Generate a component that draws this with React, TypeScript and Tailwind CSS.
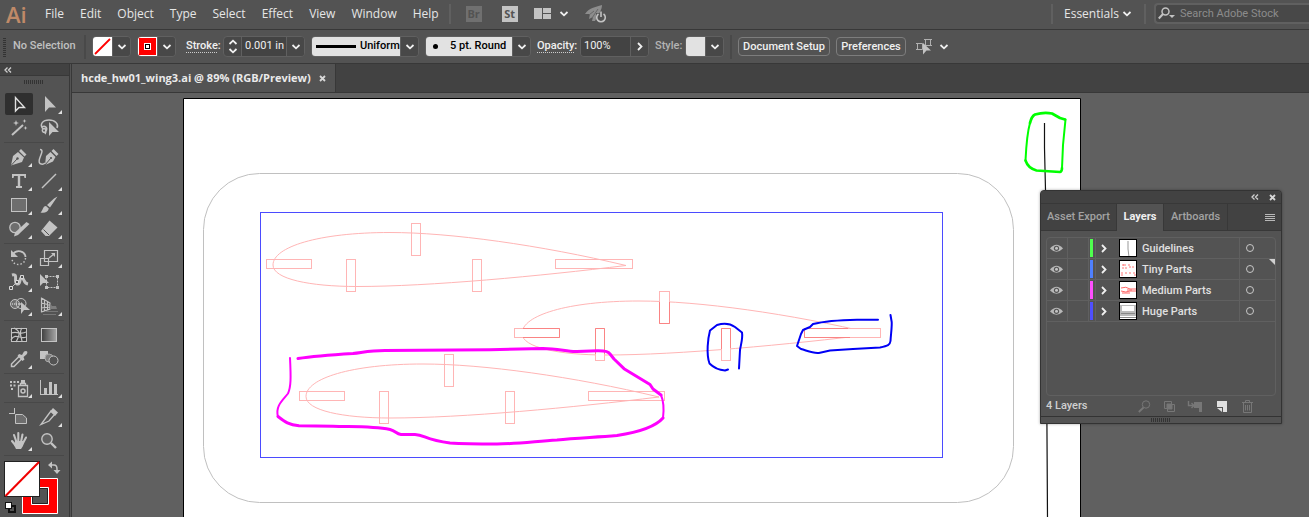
import type { ReactNode } from "react";

const menus = ["File", "Edit", "Object", "Type", "Select", "Effect", "View", "Window", "Help"];

type Tool = { name: string; icon: ReactNode; more?: boolean; active?: boolean };

const toolGroups: Tool[][] = [
  [
    { name: "Selection", active: true, icon: <path d="M11.500 5.500V19L15 15.500H20.500Z" fill="none" stroke="#e0e0e0" strokeWidth="1.400" /> },
    { name: "Direct Selection", more: true, icon: <path d="M11 4V20L15 15.500H22Z" /> },
    {
      name: "Magic Wand",
      icon: (
        <>
          <path d="M8 19L19 9" stroke="#c3c3c3" strokeWidth="2" />
          <path d="M12 4l.8 2.200L15 7l-2.200.8L12 10l-.8-2.200L9 7l2.200-.8ZM20.500 3l.6 1.400 1.400.6-1.400.6-.6 1.400-.6-1.400-1.400-.6 1.400-.6ZM21.500 10l.6 1.400 1.400.6-1.400.6-.6 1.400-.6-1.400-1.400-.6 1.400-.6Z" />
        </>
      ),
    },
    {
      name: "Lasso",
      icon: (
        <>
          <path d="M9 13C5 8 9 4 15 4S25 8 23 12M8 11c3-2 6 1 4 4s-5 0-3-2 4 2 2 5" fill="none" stroke="#c3c3c3" strokeWidth="1.500" />
          <path d="M15 6V20L18.500 16H25Z" />
        </>
      ),
    },
  ],
  [
    {
      name: "Pen",
      more: true,
      icon: (
        <>
          <path d="M17 4L22.500 9.500L20.500 11.500L15 6ZM14 7L20 12.500L18 17L7 20.500L9 11Z" />
          <path d="M7 20.500L13 14" stroke="#535353" />
          <circle cx="13.500" cy="13.500" r="1.200" fill="#535353" />
        </>
      ),
    },
    {
      name: "Curvature",
      icon: (
        <>
          <path d="M19.500 4L24.500 9L22.500 11L17.500 6ZM16.500 7L21.500 12L19 16.500L11 20L12 11Z" />
          <path d="M11 20L16.500 13.500" stroke="#535353" />
          <circle cx="17" cy="13" r="1.100" fill="#535353" />
          <path d="M6 4.500C12 5 2 15 6 18.500Q9 20 11 18" fill="none" stroke="#c3c3c3" strokeWidth="1.500" />
        </>
      ),
    },
    { name: "Type", more: true, icon: <path d="M8 5H22V9H20.500L20 7H16.200V17H18V19H12V17H13.800V7H10L9.500 9H8Z" /> },
    { name: "Line Segment", more: true, icon: <path d="M8 19L22 5" stroke="#c3c3c3" strokeWidth="1.500" /> },
    { name: "Rectangle", more: true, icon: <rect x="7.500" y="5.500" width="15" height="13" fill="#6e6e6e" stroke="#c3c3c3" /> },
    { name: "Paintbrush", more: true, icon: <path d="M23.500 3.500L16 14.500L13 12L20 5.500ZM12 13L14.800 15.500C14 19.500 10 20.500 6.500 19.500C9 18 8.500 13 12 13Z" /> },
    {
      name: "Shaper",
      more: true,
      icon: (
        <>
          <circle cx="11" cy="10.500" r="5.200" fill="#6e6e6e" stroke="#c3c3c3" strokeWidth="1.300" />
          <path d="M25.500 7L14 18L10 19.500L11 15.500L22.500 5Z" />
        </>
      ),
    },
    {
      name: "Eraser",
      more: true,
      icon: (
        <>
          <path d="M15.500 3.500L23.500 10.500L15 19H11.500L7 14Z" />
          <path d="M9.500 12.500L15 18" stroke="#535353" />
        </>
      ),
    },
  ],
  [
    {
      name: "Rotate",
      more: true,
      icon: (
        <>
          <path d="M9 8C13 3 21 5 21.500 11" fill="none" stroke="#c3c3c3" strokeWidth="1.800" />
          <path d="M21.500 12C21 20 9 21 8 13" fill="none" stroke="#c3c3c3" strokeWidth="1.500" strokeDasharray="1.500 2" />
          <path d="M7 4V11H14Z" />
        </>
      ),
    },
    {
      name: "Scale",
      more: true,
      icon: (
        <>
          <path d="M6.500 12.500h8v7h-8ZM10.500 4.500h13v11h-13Z" fill="none" stroke="#c3c3c3" strokeWidth="1.200" />
          <path d="M15 12L20 8" stroke="#c3c3c3" strokeWidth="1.300" />
          <path d="M17 7H21V11Z" />
        </>
      ),
    },
    {
      name: "Width",
      more: true,
      icon: (
        <>
          <path d="M8 5C15 3 9 12 13 14C17 15 15 7 18 8C21 9 19 13 24 14" fill="none" stroke="#c3c3c3" strokeWidth="3" />
          <path d="M7 18L18 7" stroke="#c3c3c3" />
          <path d="M5.500 16.500h3v3h-3ZM11.500 10.500h3v3h-3ZM16.500 5.500h3v3h-3Z" fill="#535353" stroke="#d8d8d8" />
        </>
      ),
    },
    {
      name: "Free Transform",
      icon: (
        <>
          <rect x="12.500" y="6.500" width="11" height="11" fill="none" stroke="#c3c3c3" strokeDasharray="2 1" />
          <path d="M11 5h3v3h-3ZM22 5h3v3h-3ZM11 16h3v3h-3ZM22 16h3v3h-3ZM6 4V16L9 13H15Z" />
        </>
      ),
    },
    {
      name: "Shape Builder",
      more: true,
      icon: (
        <>
          <circle cx="11" cy="10" r="4.500" fill="#6e6e6e" stroke="#c3c3c3" />
          <circle cx="17" cy="9.500" r="5" fill="none" stroke="#c3c3c3" />
          <path d="M8 10H18" stroke="#eee" strokeDasharray="1 1" />
          <path d="M17 8V20L20 16H26Z" />
        </>
      ),
    },
    {
      name: "Perspective Grid",
      more: true,
      icon: (
        <>
          <path d="M7.500 3.500V18.500M7.500 4L16 9V15L7.500 18M7 9L16 11M7 14L16 13M10.500 6V17M13.500 7V16" fill="none" stroke="#c3c3c3" strokeWidth="1.200" />
          <path d="M16 9L18 12H22L23 15H16Z" fill="#7d7d7d" />
          <path d="M12 17.500H24M9 20.500H22" stroke="#777" />
        </>
      ),
    },
  ],
  [
    {
      name: "Mesh",
      icon: (
        <>
          <rect x="7.500" y="5.500" width="15" height="13" fill="#3b3b3b" stroke="#c3c3c3" />
          <path d="M10 5C18 9 15 13 12 19M7 10C14 8 17 12 22 9M7 17C11 9 17 17 22 14M18 5C14 10 18 14 18 19" fill="none" stroke="#c3c3c3" strokeWidth="1.200" />
        </>
      ),
    },
    {
      name: "Gradient",
      icon: (
        <>
          <defs>
            <linearGradient id="tool-gradient">
              <stop stopColor="#3f3f3f" />
              <stop offset="1" stopColor="#a8a8a8" />
            </linearGradient>
          </defs>
          <rect x="7.500" y="5.500" width="15" height="13" fill="url(#tool-gradient)" stroke="#c3c3c3" />
        </>
      ),
    },
    {
      name: "Eyedropper",
      more: true,
      icon: (
        <>
          <path d="M15.500 9L7.500 17V19.500H10L18 11.500" fill="none" stroke="#c3c3c3" strokeWidth="1.500" />
          <path d="M15 7L18 8L20 4.500C23 3 24.500 5 22.500 7.500L19.500 10L20.500 12.500L18.500 14L13.500 9Z" />
        </>
      ),
    },
    {
      name: "Blend",
      icon: (
        <>
          <rect x="6" y="4" width="8" height="8" />
          <circle cx="15" cy="11" r="4" fill="#7b7b7b" stroke="#a8a8a8" />
          <circle cx="19.500" cy="13.500" r="4.500" fill="#535353" stroke="#c3c3c3" />
        </>
      ),
    },
  ],
  [
    {
      name: "Symbol Sprayer",
      more: true,
      icon: (
        <>
          <path d="M14.500 9.500h9v11h-9ZM16.500 9V7.500h5V9" fill="none" stroke="#c3c3c3" strokeWidth="1.300" />
          <path d="M17 4h4v3h-4ZM6 5h2v2H6ZM9.500 5h2v2h-2ZM13 5h2v2h-2ZM6 8.500h2v2H6ZM9.500 8.500h2v2h-2ZM7 12h2v2H7Z" />
          <circle cx="19" cy="15" r="2" fill="none" stroke="#c3c3c3" strokeWidth="1.500" />
        </>
      ),
    },
    { name: "Column Graph", more: true, icon: <path d="M6 4h1v14h17v1H6ZM10 12h3v6h-3ZM15 6h3v12h-3ZM20 8h3v10h-3Z" /> },
  ],
  [
    {
      name: "Artboard",
      icon: <path d="M5 8.500h5M10.500 3v6M11.500 9.500H18.500L22.500 13V18.500H11.500Z" fill="#6e6e6e" stroke="#c3c3c3" />,
    },
    {
      name: "Slice",
      more: true,
      icon: (
        <>
          <path d="M17 6L21 9L15 16L7 19.500L14 10Z" fill="none" stroke="#c3c3c3" strokeWidth="1.300" />
          <path d="M19 3L24 7.500L21 11L16 6.500Z" />
        </>
      ),
    },
    {
      name: "Hand",
      more: true,
      icon: (
        <>
          <path d="M11 12H20L19 17L17 20H12L10 16Z" />
          <path d="M8 12L12 17M10 6L12.500 13M14.300 4V13M18.500 5.500L17 13M22 8.500L18.500 15" stroke="#c3c3c3" strokeWidth="2.100" strokeLinecap="round" />
        </>
      ),
    },
    {
      name: "Zoom",
      icon: (
        <>
          <circle cx="13" cy="10" r="5.200" fill="#606060" stroke="#c3c3c3" strokeWidth="1.400" />
          <path d="M17 14L22 19" stroke="#c3c3c3" strokeWidth="2.400" />
        </>
      ),
    },
  ],
];

const layers = [
  { name: "Guidelines", color: "bg-[#4fff4f]", thumb: <path d="M8 1V9L9 17" fill="none" stroke="#999" /> },
  {
    name: "Tiny Parts",
    color: "bg-[#4f80ff]",
    thumb: <path d="M2 4H6M4 3V6M8 4H10M2 7H7M9 6H14M1 12H3M1 14H3M6 11V14M10 11V14M13 12H16M14 14H16" fill="none" stroke="#ff7777" strokeDasharray="2 1" />,
  },
  { name: "Medium Parts", color: "bg-[#ff4fff]", thumb: <path d="M1 6Q6 4 10 7H16M1 9Q6 11 10 9H16M2 11H10M7 8H12" fill="none" stroke="#ff6666" /> },
  {
    name: "Huge Parts",
    color: "bg-[#4f4fff]",
    thumb: (
      <>
        <path d="M0 2H16V13H0Z" fill="#bbb" />
        <path d="M2 3H14V8H2Z" fill="#fff" />
        <path d="M1 10.500H15M0 14.500H16" stroke="#888" />
      </>
    ),
  },
];

const wingTop = "M273 265C273 247 318 232.500 390 232.500C450 232.500 540 245 626 265.500";
const wingBottom = "M273 265C273 279 310 286.500 357 286.500C430 286.500 540 276 626 265.500";

type Slot = [number, number, number, number];

const upperSlots: Slot[] = [
  [266.5, 259.5, 45, 9],
  [346.5, 259.5, 9, 32],
  [411.5, 223.5, 9, 32],
  [472.5, 259.5, 9, 32],
  [555.5, 259.5, 77, 9],
];
const middleSlots: Slot[] = [
  [514.5, 328.5, 45, 9],
  [595.5, 328.5, 9, 32],
  [659.5, 291.5, 10, 32],
  [721.5, 328.5, 9, 32],
  [804.5, 328.5, 76, 9],
];
const lowerSlots: Slot[] = [
  [299.5, 391.5, 45, 9],
  [379.5, 391.5, 9, 32],
  [444.5, 354.5, 9, 32],
  [505.5, 391.5, 9, 32],
  [588.5, 391.5, 76, 9],
];

function Slots({ items, fill }: { items: Slot[]; fill: string }) {
  return (
    <>
      {items.map(([x, y, w, h]) => (
        <rect key={`${x}-${y}`} x={x} y={y} width={w} height={h} fill={fill} />
      ))}
    </>
  );
}

function Artboard() {
  return (
    <svg viewBox="183 98 898 420" className="block h-[420px] w-[898px]" fill="none" role="img" aria-label="Wing artwork">
      <path d="M183.500 530V98.500H1080.500V530" fill="#fff" stroke="#000" />
      <rect x="203.500" y="173.500" width="810" height="329" rx="56" stroke="#c0c0c0" />
      <rect x="260.500" y="212.500" width="682" height="245" stroke="#4b4bff" />
      <g stroke="#ffb5b5">
        <path d={wingTop} />
        <path d={wingBottom} />
        <g transform="translate(249 68.500)">
          <path d={wingTop} />
          <path d={wingBottom} />
        </g>
        <g transform="translate(33 131.500)">
          <path d={wingTop} />
          <path d={wingBottom} />
        </g>
        <Slots items={upperSlots} fill="none" />
        <Slots items={middleSlots} fill="#fff" />
        <Slots items={lowerSlots} fill="none" />
      </g>
      <path
        d="M523 328.500H559.500V337.500H523M595.500 354V328.500H604.500V354M659.500 302V323.500H669.500V302M721.500 349V328.500H730.500V348M848 328.500H804.500V337.500H850"
        stroke="#fa8484"
      />
      <path d="M1044.500 123V148L1045.500 190L1047.500 518" stroke="#111" strokeWidth="1.200" />
      <g strokeLinejoin="round" strokeLinecap="round">
        <path
          d="M298 358.500C315 356 330 355 353 353.500C365 352 371 350.500 385 350.500L490 349.700L543 348.500C558 348.500 568 352 577 351.500L597 350.700C606 350.500 609 352 610 354L614 359L624 368.700L650 384.500L653 389L661 395"
          stroke="#ff00ff"
          strokeWidth="3"
        />
        <path d="M661 395C664 402 664 410 663 418" stroke="#ff00ff" strokeWidth="2" />
        <path
          d="M663 418C656 426 640 432 617 435.500C592 437.500 575 438 557 440C530 442 515 444 497 444C475 444 465 444 450 443C425 440 425 435 415 434.500H401C396 434 396 431 390 429.500C372 426 350 427 333 426.300L299 425.700C289 425 285 422 278 416.500"
          stroke="#ff00ff"
          strokeWidth="3"
        />
        <path d="M278 416.500C275 406 283 400 288 393.500C291 387 291 378 290 358" stroke="#ff00ff" strokeWidth="2" />
        <path
          d="M728 369.500L725 370.500C717 370 713 367 709.500 363.500C706 354 708 338 710 330.500L717 325C724 323 730 323.500 735 327L742 332.500C743 338 741 344 740 350L739 368.500"
          stroke="#0000f5"
          strokeWidth="2"
        />
        <path
          d="M878 319.700H857C842 320 825 321 813 324L810 327L803 330L801 334L797 346L801 349C808 351 814 354 820 352.700L830 350.500L853 349L880 347.500C888 346 890 345 890.500 341C891 333 892 327 891.700 322L890.500 315"
          stroke="#0000f5"
          strokeWidth="2"
        />
        <path
          d="M1065 119.500L1060 118L1052 113.500C1045 112 1040 113 1035 114.500C1032 116 1031 119 1030 123"
          stroke="#00ff00"
          strokeWidth="2.800"
        />
        <path d="M1030 123C1028 130 1026 150 1025.500 160.500" stroke="#00ff00" strokeWidth="2" />
        <path d="M1025.500 160.500C1027 165 1031 169 1036.500 170.500L1060 172C1062 171.500 1062 170 1062 168" stroke="#00ff00" strokeWidth="2.600" />
        <path d="M1062 168L1063 145L1065.500 119.500" stroke="#00ff00" strokeWidth="2" />
      </g>
    </svg>
  );
}

function Chevron({ className = "w-2.5" }: { className?: string }) {
  return (
    <svg viewBox="0 0 10 6" className={`h-1.5 ${className}`} fill="none" stroke="#f0f0f0" strokeWidth="1.800" aria-hidden="true">
      <path d="M1.500 1L5 4.300L8.500 1" />
    </svg>
  );
}

function RightChevron() {
  return (
    <svg viewBox="0 0 6 9" className="h-[9px] w-1.5" fill="none" stroke="#f0f0f0" strokeWidth="1.800" aria-hidden="true">
      <path d="M1 1L4.500 4.500L1 8" />
    </svg>
  );
}

function DropButton({ label }: { label: string }) {
  return (
    <button type="button" aria-label={label} className="flex w-[18px] shrink-0 items-center justify-center border-l border-[#606060] bg-[#484848]">
      <Chevron />
    </button>
  );
}

function Grip() {
  return <span className="h-1 w-5 bg-[repeating-linear-gradient(90deg,#333_0_1px,#535353_1px_2px)]" />;
}

function DoubleChevron() {
  return (
    <svg viewBox="0 0 8 6" className="h-1.5 w-2" fill="none" stroke="#d0d0d0" strokeWidth="1.300" aria-hidden="true">
      <path d="M3.500 .5L1 3L3.500 5.500M7 .5L4.500 3L7 5.500" />
    </svg>
  );
}

function Cross() {
  return (
    <svg viewBox="0 0 7 7" className="size-[7px]" stroke="#d8d8d8" strokeWidth="1.800" aria-hidden="true">
      <path d="M1 1L6 6M6 1L1 6" />
    </svg>
  );
}

function MenuBar() {
  return (
    <header className="flex h-[30px] shrink-0 items-center border-b border-[#383838] pb-0.5 text-[12px] text-[#e6e6e6]">
      <span className="w-[37px] pl-1.5 text-[22px] leading-6 font-semibold text-[#c08a68]">Ai</span>
      <nav className="flex items-center">
        {menus.map((m) => (
          <button key={m} type="button" className="px-2">
            {m}
          </button>
        ))}
      </nav>
      <div className="ml-0.5 flex items-center">
        <span className="h-5 w-0.5 bg-[#606060]" />
        <button type="button" className="ml-[15px] size-4 bg-[#707070] text-[11px] leading-4 font-bold text-[#535353]">
          Br
        </button>
        <button type="button" className="ml-5 size-4 bg-[#c3c3c3] text-[11px] leading-4 font-bold text-[#535353]">
          St
        </button>
        <button type="button" aria-label="Arrange documents" className="ml-4 flex items-center gap-2">
          <svg viewBox="0 0 17 11" className="h-[11px] w-[17px]" fill="#c3c3c3">
            <path d="M0 0H8V11H0ZM9 0H17V5H9ZM9 6H17V11H9Z" />
          </svg>
          <Chevron />
        </button>
        <button type="button" aria-label="GPU performance" className="ml-4">
          <svg viewBox="0 0 22 18" className="h-[18px] w-[22px]">
            <path d="M0 9C4 3 10 2 17 0C17 5 14 8 10 16L7 16L8 12L4 14L5 9Z" fill="#8d8d8d" />
            <path d="M4 10L9 6M7 13L13 4" stroke="#686868" />
            <path d="M11 8H21V18H11Z" fill="#535353" />
            <path d="M13.500 9A4.300 4.300 0 1 0 18.500 9M16 6.500V12" fill="none" stroke="#c3c3c3" strokeWidth="1.600" />
          </svg>
        </button>
      </div>
      <div className="ml-auto flex items-center">
        <span className="h-5 w-0.5 bg-[#606060]" />
        <button type="button" className="flex w-[91px] items-center justify-between pr-3 pl-[11px]">
          Essentials
          <Chevron />
        </button>
        <span className="h-5 w-0.5 bg-[#606060]" />
        <label className="ml-2 flex h-[21px] w-[155px] items-center rounded-l border-2 border-r-0 border-[#606060] bg-[#484848] pl-0.5">
          <svg viewBox="0 0 17 13" className="h-[13px] w-[17px] shrink-0" fill="none" stroke="#c3c3c3" strokeWidth="1.500">
            <circle cx="7.500" cy="4.500" r="3.500" />
            <path d="M5 7L.8 11.500" strokeWidth="2" />
            <path d="M11 8H17L14 11Z" fill="#c3c3c3" stroke="none" />
          </svg>
          <input
            aria-label="Search Adobe Stock"
            className="ml-[5px] h-4 w-full min-w-0 bg-transparent font-['Roboto',sans-serif] text-[11px] leading-4 outline-none placeholder:text-[#8c8c8c]"
            placeholder="Search Adobe Stock"
          />
        </label>
      </div>
    </header>
  );
}

function ControlBar() {
  const field = "flex h-[21px] shrink-0 overflow-hidden rounded-sm border border-[#606060]";
  return (
    <div className="flex h-[34px] shrink-0 items-center gap-1.5 border-b border-[#383838] pl-[3px] font-['Roboto',sans-serif] text-[11px] font-medium text-[#f0f0f0]">
      <span className="h-5 w-[3px] shrink-0 bg-[repeating-linear-gradient(0deg,#333_0_1px,#535353_1px_2px)]" />
      <span className="w-[66px] shrink-0 pl-px whitespace-nowrap text-[#c0c0c0]">No Selection</span>
      <span className="h-6 w-0.5 shrink-0 bg-[#494949]" />
      <div className={`${field} w-[39px]`}>
        <button type="button" aria-label="Fill" className="flex-1 bg-white">
          <svg viewBox="0 0 19 19" className="size-[19px]">
            <path d="M2 17L17 2" stroke="#f00" strokeWidth="1.800" />
          </svg>
        </button>
        <DropButton label="Fill options" />
      </div>
      <div className={`${field} w-[39px]`}>
        <button type="button" aria-label="Stroke color" className="flex flex-1 items-center justify-center border border-white bg-[#ff0000]">
          <span className="flex size-[7px] items-center justify-center bg-white">
            <span className="size-[5px] border border-black bg-white" />
          </span>
        </button>
        <DropButton label="Stroke options" />
      </div>
      <label htmlFor="stroke" className="ml-1 w-[31px] shrink-0 border-b border-dotted border-[#ccc] leading-3 whitespace-nowrap">
        Stroke:
      </label>
      <div className={`${field} w-[82px] bg-[#484848]`}>
        <button type="button" aria-label="Stroke step" className="flex w-[18px] shrink-0 flex-col items-center justify-center gap-[3px] border-r border-[#606060]">
          <Chevron className="w-2.5 rotate-180" />
          <Chevron />
        </button>
        <input id="stroke" defaultValue="0.001 in" className="w-0 flex-1 bg-[#434343] pl-[3px] font-normal outline-none" />
        <DropButton label="Stroke weight" />
      </div>
      <div className={`${field} w-[108px]`}>
        <button type="button" className="flex flex-1 items-center gap-1 bg-[#e2e2e2] pl-1 text-black">
          <span className="h-[3px] w-10 bg-black" />
          Uniform
        </button>
        <DropButton label="Width profile" />
      </div>
      <div className={`${field} w-[106px]`}>
        <button type="button" className="flex flex-1 items-center gap-3 bg-[#e2e2e2] pl-[7px] whitespace-nowrap text-black">
          <span className="size-[5px] rounded-full bg-black" />5 pt. Round
        </button>
        <DropButton label="Brush" />
      </div>
      <label htmlFor="opacity" className="w-[37px] shrink-0 border-b border-dotted border-[#ccc] leading-3 whitespace-nowrap">
        Opacity:
      </label>
      <div className={`${field} w-[69px]`}>
        <input id="opacity" defaultValue="100%" className="w-0 flex-1 bg-[#434343] pl-[3px] font-normal outline-none" />
        <button type="button" aria-label="Opacity options" className="flex w-[18px] items-center justify-center border-l border-[#606060] bg-[#484848]">
          <RightChevron />
        </button>
      </div>
      <span className="w-6 shrink-0 text-[#b4b4b4]">Style:</span>
      <div className={`${field} w-[39px]`}>
        <button type="button" aria-label="Graphic style" className="flex-1 bg-[#e2e2e2]" />
        <DropButton label="Style options" />
      </div>
      <span className="h-6 w-0.5 shrink-0 bg-[#494949]" />
      <button type="button" className="h-[19px] w-[92px] shrink-0 rounded-sm border border-[#7d7d7d] leading-4 whitespace-nowrap">
        Document Setup
      </button>
      <button type="button" className="h-[19px] w-[70px] shrink-0 rounded-sm border border-[#7d7d7d] leading-4 whitespace-nowrap">
        Preferences
      </button>
      <button type="button" aria-label="Select similar" className="ml-1 flex shrink-0 items-center gap-1.5">
        <svg viewBox="0 0 17 17" className="size-[17px]" fill="none" stroke="#b0b0b0">
          <path d="M1.500 5.500h5v6h-5ZM9.500 1.500h5v6h-5ZM0 5.500h2M0 11.500h2M8 1.500h8M8 7.500h8" />
          <path d="M7 5V16.500L10.500 12.500H15Z" fill="#c3c3c3" stroke="none" />
        </svg>
        <Chevron />
      </button>
    </div>
  );
}

function ToolPanel() {
  return (
    <aside className="flex w-[70px] shrink-0 flex-col border-r border-[#383838]">
      <div className="flex h-3 shrink-0 items-center border-b border-[#383838] bg-[#424242] pl-1">
        <button type="button" aria-label="Collapse tools">
          <DoubleChevron />
        </button>
      </div>
      <div className="flex h-[14px] shrink-0 items-start justify-center pt-1 pr-0.5">
        <Grip />
      </div>
      <div className="flex flex-col pr-[5px] pl-1">
        {toolGroups.map((group, i) => (
          <div key={i} className="grid grid-cols-2 border-b border-[#484848] py-0.5">
            {group.map((t) => (
              <button key={t.name} type="button" aria-label={t.name} className="h-6">
                <svg viewBox="0 0 30 24" className="block h-6 w-[30px]" fill="#c3c3c3">
                  {t.active && <rect x="1" y="1" width="28" height="22" rx="2" fill="#2f2f2f" />}
                  {t.icon}
                  {t.more && <path d="M28 18V22H24Z" fill="#e0e0e0" />}
                </svg>
              </button>
            ))}
          </div>
        ))}
      </div>
      <svg viewBox="0 0 66 60" className="h-[60px] w-[66px] shrink-0" role="img" aria-label="Fill and stroke colors">
        <path d="M22 22H58V58H22ZM31 31V49H49V31Z" fill="#f00" fillRule="evenodd" />
        <path d="M22.500 22.500H57.500V57.500H22.500ZM31.500 31.500V48.500H48.500V31.500Z" fill="none" stroke="#fff" />
        <path d="M32.500 32.500H47.500V47.500H32.500Z" fill="#535353" stroke="#222" />
        <rect x="4.500" y="5.500" width="35" height="35" fill="#fff" stroke="#222" />
        <path d="M5.500 40L39 6" stroke="#f00000" strokeWidth="2" />
        <path d="M51 9H54Q57 9 57 13V16" fill="none" stroke="#c3c3c3" strokeWidth="1.500" />
        <path d="M48 9L52 5.500V12.500ZM57 18L53.500 14H60.500Z" fill="#c3c3c3" />
        <rect x="9" y="50" width="6" height="6" fill="#535353" stroke="#111" strokeWidth="2" />
        <rect x="5.500" y="46.500" width="6" height="6" fill="#fff" stroke="#111" />
      </svg>
    </aside>
  );
}

function LayersPanel() {
  return (
    <section className="absolute top-[97px] right-[27px] flex w-[242px] flex-col rounded-t border border-[#333] bg-[#535353] font-['Roboto',sans-serif] text-[11px] font-medium shadow-[0_0_3px_rgba(0,0,0,0.35)]">
      <div className="flex h-[13px] items-center justify-end gap-2.5 rounded-t border-b border-[#383838] bg-[#424242] pr-[5px]">
        <button type="button" aria-label="Collapse panel">
          <DoubleChevron />
        </button>
        <button type="button" aria-label="Close panel">
          <Cross />
        </button>
      </div>
      <div role="tablist" className="flex h-[27px] bg-[#424242] text-[#a3a3a3]">
        <button type="button" role="tab" className="w-[76px] border-r border-b border-[#383838] whitespace-nowrap">
          Asset Export
        </button>
        <button type="button" role="tab" aria-selected="true" className="w-[46px] bg-[#535353] font-bold text-[#f0f0f0]">
          Layers
        </button>
        <button type="button" role="tab" className="w-[65px] border-x border-b border-[#383838]">
          Artboards
        </button>
        <button type="button" aria-label="Panel menu" className="flex flex-1 items-center justify-end border-b border-[#383838] pr-1.5">
          <svg viewBox="0 0 10 7" className="h-[7px] w-2.5" stroke="#b8b8b8">
            <path d="M0 .5H10M0 2.500H10M0 4.500H10M0 6.500H10" />
          </svg>
        </button>
      </div>
      <ul className="mx-[5px] mt-1.5 h-[159px] rounded-sm border border-[#606060] text-[#e0e0e0]">
        {layers.map((l) => (
          <li key={l.name} className="flex h-[21px] items-center border-b border-[#606060]">
            <button type="button" aria-label={`Show ${l.name}`} className="flex h-full w-[21px] items-center border-r border-[#606060] pl-[3px]">
              <svg viewBox="0 0 13 9" className="h-[9px] w-[13px]">
                <path d="M0 4.500Q6.500 -3 13 4.500Q6.500 11 0 4.500Z" fill="#b8b8b8" />
                <circle cx="6.500" cy="4.300" r="2.600" fill="#535353" />
                <circle cx="6.500" cy="4.300" r="1.500" fill="#c3c3c3" />
              </svg>
            </button>
            <span className="h-full w-[21px] border-r border-[#606060]" />
            <span className={`ml-px h-[18px] w-[3px] ${l.color}`} />
            <button type="button" aria-label={`Expand ${l.name}`} className="ml-0.5 flex h-full w-6 items-center border-l border-[#606060] pl-[5px]">
              <RightChevron />
            </button>
            <svg viewBox="0 0 16 16" className="size-[18px] border border-black bg-white">
              {l.thumb}
            </svg>
            <span className="flex-1 pt-0.5 pl-[5px]">{l.name}</span>
            <button type="button" aria-label={`Target ${l.name}`} className="relative flex h-full w-9 items-center border-l border-[#606060] pl-1.5">
              <span className="size-2 rounded-full border border-[#c8c8c8]" />
              {l.name === "Tiny Parts" && (
                <svg viewBox="0 0 6 6" className="absolute top-0 right-0 size-1.5" fill="#d0d0d0">
                  <path d="M0 0H6V6Z" />
                </svg>
              )}
            </button>
          </li>
        ))}
      </ul>
      <div className="flex h-5 items-center pr-[27px] pl-[5px] text-[#d0d0d0]">
        4 Layers
        <svg viewBox="0 0 116 13" className="ml-auto h-[13px] w-[116px]" fill="none" stroke="#777">
          <circle cx="8" cy="4.500" r="3.700" />
          <path d="M5.500 7.500L.8 12" strokeWidth="1.800" />
          <path d="M26.500 1.500h7v7h-7ZM29.500 4.500h7v7h-7Z" />
          <path d="M29 4h5v5h-5Z" fill="#777" />
          <path d="M50.500 1V5.500H56M53.500 3L56 5.500L53.500 8" strokeWidth="1.400" />
          <path d="M56 2H64V12H61V8H56Z" fill="#777" stroke="none" />
          <path d="M79 1H89V12H85V7H79Z" fill="#e0e0e0" stroke="none" />
          <path d="M79 8H84V12Z" fill="#e0e0e0" stroke="none" />
          <path d="M104 2.500H115M107.500 2V.5H111.500V2M105.500 3V12.500H113.500V3M107.500 5V10.500M109.500 5V10.500M111.500 5V10.500" />
        </svg>
      </div>
      <div className="flex h-[7px] items-center justify-center border-t border-[#333]">
        <Grip />
      </div>
    </section>
  );
}

export default function App() {
  return (
    <div className="flex h-screen flex-col overflow-hidden bg-[#535353] font-['Open_Sans','Noto_Sans',sans-serif]">
      <MenuBar />
      <ControlBar />
      <div className="flex min-h-0 flex-1 gap-px">
        <ToolPanel />
        <div className="flex min-w-0 flex-1 flex-col border-l border-[#383838]">
          <div className="flex h-[29px] shrink-0 border-b border-[#383838] bg-[#424242]">
            <div className="flex items-center gap-2 border-r border-[#383838] bg-[#535353] pr-[9px] pl-[9px] text-[11px] font-bold whitespace-nowrap text-[#eaeaea]">
              hcde_hw01_wing3.ai @ 89% (RGB/Preview)
              <button type="button" aria-label="Close document">
                <Cross />
              </button>
            </div>
          </div>
          <main className="relative min-h-0 flex-1 overflow-hidden bg-[#606060]">
            <div className="pt-[5px] pl-[111px]">
              <Artboard />
            </div>
            <LayersPanel />
          </main>
        </div>
      </div>
    </div>
  );
}
